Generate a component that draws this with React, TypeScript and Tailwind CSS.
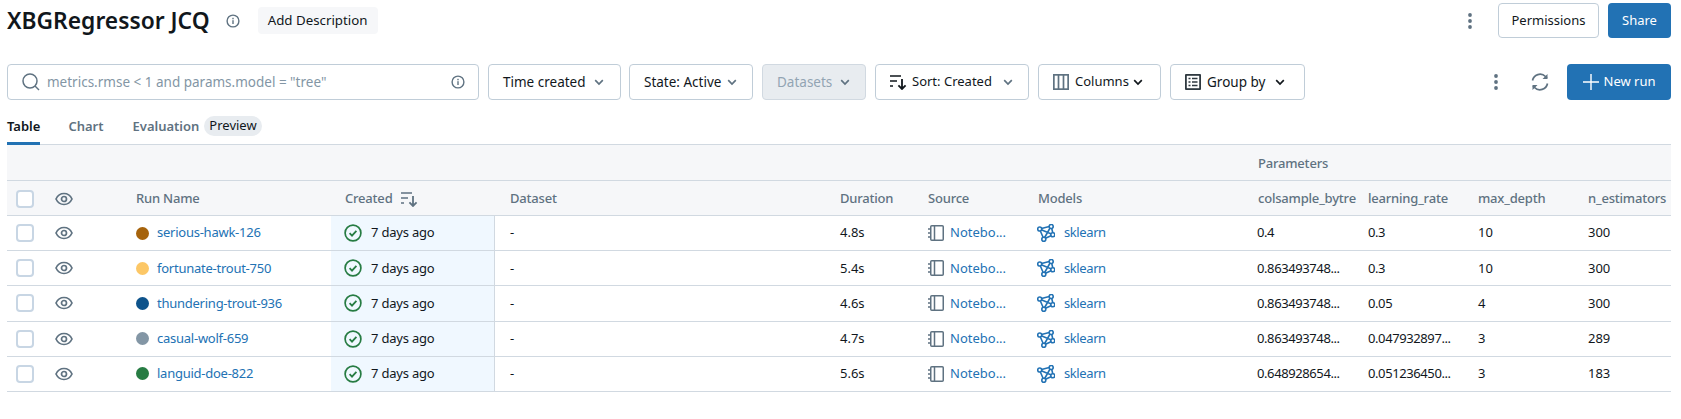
import type { ReactNode } from "react";

const GRID =
  "grid grid-cols-[39px_81px_204px_164px_336px_88px_110px_220px_110px_110px_110px_92px]";

const runs = [
  { name: "serious-hawk-126", dot: "bg-[#a6630c]", dur: "4.8s", col: "0.4", lr: "0.3", depth: "10", est: "300" },
  { name: "fortunate-trout-750", dot: "bg-[#fcc766]", dur: "5.4s", col: "0.863493748...", lr: "0.3", depth: "10", est: "300" },
  { name: "thundering-trout-936", dot: "bg-[#0e538b]", dur: "4.6s", col: "0.863493748...", lr: "0.05", depth: "4", est: "300" },
  { name: "casual-wolf-659", dot: "bg-[#8396a5]", dur: "4.7s", col: "0.863493748...", lr: "0.047932897...", depth: "3", est: "289" },
  { name: "languid-doe-822", dot: "bg-[#277c43]", dur: "5.6s", col: "0.648928654...", lr: "0.051236450...", depth: "3", est: "183" },
];

function Chevron({ className = "text-[#5f7281]" }: { className?: string }) {
  return (
    <svg width="12" height="12" viewBox="0 0 12 12" fill="none" className={className}>
      <path d="M2.2 4.2 6 8l3.8-3.8" stroke="currentColor" strokeWidth="1.7" />
    </svg>
  );
}

function InfoIcon() {
  return (
    <svg width="14" height="14" viewBox="0 0 14 14" fill="none" className="text-[#5f7281]">
      <circle cx="7" cy="7" r="5.9" stroke="currentColor" strokeWidth="1.4" />
      <rect x="6.3" y="6.2" width="1.4" height="3.8" fill="currentColor" />
      <rect x="6.3" y="3.8" width="1.4" height="1.5" fill="currentColor" />
    </svg>
  );
}

function Kebab() {
  return (
    <svg width="6" height="18" viewBox="0 0 6 18" className="text-[#5f7281]" fill="currentColor">
      <circle cx="3" cy="3" r="1.9" />
      <circle cx="3" cy="9" r="1.9" />
      <circle cx="3" cy="15" r="1.9" />
    </svg>
  );
}

function SortIcon({ className = "" }: { className?: string }) {
  return (
    <svg width="17" height="16" viewBox="0 0 17 16" fill="none" className={className}>
      <path d="M0 2h11M0 7h7M0 12h3" stroke="currentColor" strokeWidth="1.6" />
      <path d="M12 5v10M8.4 11.4 12 15l3.6-3.6" stroke="currentColor" strokeWidth="1.8" />
    </svg>
  );
}

function EyeIcon() {
  return (
    <svg width="18" height="14" viewBox="0 0 18 14" fill="none" className="text-[#5f7281]">
      <path d="M1 7c1.7-3.6 4.6-5.500 8-5.500s6.300 1.900 8 5.500c-1.700 3.600-4.600 5.500-8 5.500S2.700 10.600 1 7Z" stroke="currentColor" strokeWidth="1.700" />
      <circle cx="9" cy="7" r="2.500" stroke="currentColor" strokeWidth="1.700" />
    </svg>
  );
}

function StatusIcon() {
  return (
    <svg width="18" height="18" viewBox="0 0 18 18" fill="none" className="text-[#277c43]">
      <circle cx="9" cy="9" r="7.900" stroke="currentColor" strokeWidth="1.700" />
      <path d="m5.600 9.200 2.400 2.400 4.400-4.700" stroke="currentColor" strokeWidth="1.800" />
    </svg>
  );
}

function NotebookIcon() {
  return (
    <svg width="16" height="16" viewBox="0 0 16 16" fill="none" className="text-[#5f7281]">
      <rect x="2.750" y="0.750" width="12.500" height="14.500" rx="1" stroke="currentColor" strokeWidth="1.500" />
      <path d="M6.500 1v14M0 4h3M0 8h3M0 12h3" stroke="currentColor" strokeWidth="1.500" />
    </svg>
  );
}

function ModelIcon() {
  return (
    <svg width="18" height="18" viewBox="0 0 18 18" fill="none" className="text-[#2272b4]">
      <path d="M2.500 5 14.200 2M2.500 5l13.700 5.700M2.500 5l4.300 10M14.200 2l2 8.700M6.800 15l9.400-4.300M6.800 15 14.200 2" stroke="currentColor" strokeWidth="1.600" />
      <circle cx="2.700" cy="5" r="2" fill="white" stroke="currentColor" strokeWidth="1.600" />
      <circle cx="14.200" cy="2.500" r="2" fill="white" stroke="currentColor" strokeWidth="1.600" />
      <circle cx="15.800" cy="10.700" r="2" fill="white" stroke="currentColor" strokeWidth="1.600" />
      <circle cx="6.800" cy="15.200" r="2" fill="white" stroke="currentColor" strokeWidth="1.600" />
    </svg>
  );
}

function FilterButton({ children, className }: { children: ReactNode; className: string }) {
  return (
    <button className={`flex h-9 items-center rounded border border-[#c0cdd8] bg-white text-[13.500px] text-[#11171c] ${className}`}>
      {children}
    </button>
  );
}

export default function App() {
  return (
    <div className="h-[419px] w-[1681px] overflow-hidden bg-white font-['Noto_Sans',sans-serif] text-[13px] text-[#11171c]">
      <div className="mt-[3px] flex h-[35px] items-center pl-[7px] pr-[10px]">
        <h1 className="text-[22.800px] font-semibold leading-8">XBGRegressor JCQ</h1>
        <span className="ml-4 flex">
          <InfoIcon />
        </span>
        <button className="ml-[18px] flex h-[27px] w-[120px] items-center justify-center rounded bg-[#f6f7f9] text-[13.300px]">Add Description</button>
        <div className="ml-auto flex items-center">
          <Kebab />
          <button className="ml-[25px] h-[35px] w-[101px] rounded border border-[#c0cdd8]">Permissions</button>
          <button className="ml-[9px] h-[35px] w-[63px] rounded bg-[#2272b4] text-white">Share</button>
        </div>
      </div>

      <div className="mt-[26px] flex items-center pl-[7px] pr-[10px]">
        <div className="flex h-9 w-[472px] items-center rounded border border-[#c0cdd8] pl-[14px] pr-[13px]">
          <svg width="18" height="18" viewBox="0 0 18 18" fill="none" className="text-[#5f7281]">
            <circle cx="8" cy="8" r="7" stroke="currentColor" strokeWidth="1.500" />
            <path d="m13 13 4 4" stroke="currentColor" strokeWidth="1.500" />
          </svg>
          <span className="ml-[7px] text-[13.500px] text-[#8396a5]">metrics.rmse &lt; 1 and params.model = "tree"</span>
          <span className="ml-auto flex">
            <InfoIcon />
          </span>
        </div>
        <FilterButton className="ml-[9px] w-[133px] justify-between pl-[14px] pr-[15px]">
          Time created <Chevron />
        </FilterButton>
        <FilterButton className="ml-2 w-[124px] justify-between pl-[14px] pr-[14px]">
          State: Active <Chevron />
        </FilterButton>
        <button className="ml-[9px] flex h-9 w-[104px] items-center justify-between rounded border border-[#d1d9e1] bg-[#e8ecf0] pl-[14px] pr-[14px] text-[13.500px] text-[#92a4b3]">
          Datasets <Chevron />
        </button>
        <FilterButton className="ml-[9px] w-[154px] pl-[14px] pr-[14px]">
          <SortIcon />
          <span className="ml-[5px] text-[13px]">Sort: Created</span>
          <span className="ml-auto flex">
            <Chevron />
          </span>
        </FilterButton>
        <FilterButton className="ml-[9px] w-[123px] pl-[14px] pr-[14px]">
          <svg width="16" height="16" viewBox="0 0 16 16" fill="none" className="text-[#5f7281]">
            <rect x="0.850" y="0.850" width="14.300" height="14.300" stroke="currentColor" strokeWidth="1.700" />
            <path d="M5.500 1v14M10.500 1v14" stroke="currentColor" strokeWidth="1.700" />
          </svg>
          <span className="ml-[6px] text-[13px]">Columns</span>
          <span className="ml-[3px] flex">
            <Chevron className="text-[#11171c]" />
          </span>
        </FilterButton>
        <FilterButton className="ml-[9px] w-[135px] pl-[14px] pr-[18px]">
          <svg width="16" height="16" viewBox="0 0 16 16" fill="none" className="text-[#2f3940]">
            <rect width="16" height="16" rx="1" fill="currentColor" />
            <rect x="1.800" y="1.800" width="12.400" height="12.400" fill="white" />
            <path d="M3.500 4.500h2M7 4.500h5.500M3.500 8h2M7 8h5.500M3.500 11.500h2M7 11.500h5.500" stroke="currentColor" strokeWidth="1.400" />
          </svg>
          <span className="ml-[6px]">Group by</span>
          <span className="ml-auto flex">
            <Chevron className="text-[#11171c]" />
          </span>
        </FilterButton>
        <div className="ml-auto flex items-center">
          <Kebab />
          <svg width="18" height="18" viewBox="0 0 18 18" fill="none" className="ml-[32px] text-[#5f7281]">
            <path d="M1.500 7.500A7.700 7.700 0 0 1 14.500 3.500L16 5M16.500 10.500A7.700 7.700 0 0 1 3.500 14.500L2 13" stroke="currentColor" strokeWidth="1.700" />
            <path d="M16.500 1v5h-5zM1.500 17v-5h5z" fill="currentColor" />
          </svg>
          <button className="ml-[18px] flex h-9 w-[104px] items-center justify-center rounded bg-[#2272b4] text-white">
            <svg width="16" height="16" viewBox="0 0 16 16" fill="none">
              <path d="M8 0v16M0 8h16" stroke="currentColor" strokeWidth="1.400" />
            </svg>
            <span className="ml-[5px]">New run</span>
          </button>
        </div>
      </div>

      <div className="mx-[7px] mt-[17px] flex h-[28px] w-[1664px] items-start border-b border-[#d1d9e1]">
        <span className="h-[28px] border-b-[3px] border-[#2272b4] font-semibold">Table</span>
        <span className="ml-[28px] font-semibold text-[#5f7281]">Chart</span>
        <span className="ml-[29px] font-semibold text-[#5f7281]">Evaluation</span>
        <span className="ml-[5px] -mt-px rounded-full bg-[#e8ecf0] px-[5px]">Preview</span>
      </div>

      <div className="mx-[7px] w-[1664px]">
        <div className="flex h-[36px] items-center border-b border-[#d1d9e1] bg-[#f6f7f9] pl-[1250px] pt-[3px] font-medium text-[#5f7281]">
          <span className="pl-[1px] tracking-[-0.2px]">Parameters</span>
        </div>
        <div className={`${GRID} h-[35px] items-center border-b border-[#d1d9e1] bg-[#f6f7f9] pt-[1px] font-medium tracking-[-0.2px] text-[#5f7281]`}>
          <span className="ml-[9px] h-[18px] w-[18px] rounded border-2 border-[#c8d6e4] bg-white" />
          <span className="flex pl-[9px]">
            <EyeIcon />
          </span>
          <span className="pl-[9px]">Run Name</span>
          <span className="flex items-center pl-[14px]">
            Created
            <SortIcon className="ml-[8px]" />
          </span>
          <span className="pl-[15px]">Dataset</span>
          <span className="pl-[9px]">Duration</span>
          <span className="pl-[9px]">Source</span>
          <span className="pl-[9px]">Models</span>
          <span className="pl-[9px]">colsample_bytre</span>
          <span className="pl-[9px]">learning_rate</span>
          <span className="pl-[9px]">max_depth</span>
          <span className="pl-[9px]">n_estimators</span>
        </div>
        {runs.map((r) => (
          <div key={r.name} className={`${GRID} h-[35.200px] items-center border-b border-[#d1d9e1]`}>
            <span className="ml-[9px] h-[18px] w-[18px] rounded border-2 border-[#c8d6e4] bg-white" />
            <span className="flex pl-[9px]">
              <EyeIcon />
            </span>
            <span className="flex items-center pl-[9px]">
              <span className={`h-[13px] w-[13px] rounded-full ${r.dot}`} />
              <span className="ml-[8px] tracking-[-0.25px] text-[#2272b4]">{r.name}</span>
            </span>
            <span className="flex h-full items-center border-r border-[#d1d9e1] bg-[#f0f8ff] pl-[13px]">
              <StatusIcon />
              <span className="ml-[9px] tracking-[-0.2px]">7 days ago</span>
            </span>
            <span className="pl-[15px]">-</span>
            <span className="pl-[9px]">{r.dur}</span>
            <span className="flex items-center pl-[9px]">
              <NotebookIcon />
              <span className="ml-[6px] text-[#2272b4]">Notebo...</span>
            </span>
            <span className="flex items-center pl-[8px]">
              <ModelIcon />
              <span className="ml-[9px] tracking-[-0.4px] text-[#2272b4]">sklearn</span>
            </span>
            <span className="pl-[8px] tracking-[-0.4px]">{r.col}</span>
            <span className="pl-[9px] tracking-[-0.4px]">{r.lr}</span>
            <span className="pl-[9px]">{r.depth}</span>
            <span className="pl-[9px]">{r.est}</span>
          </div>
        ))}
      </div>
    </div>
  );
}
